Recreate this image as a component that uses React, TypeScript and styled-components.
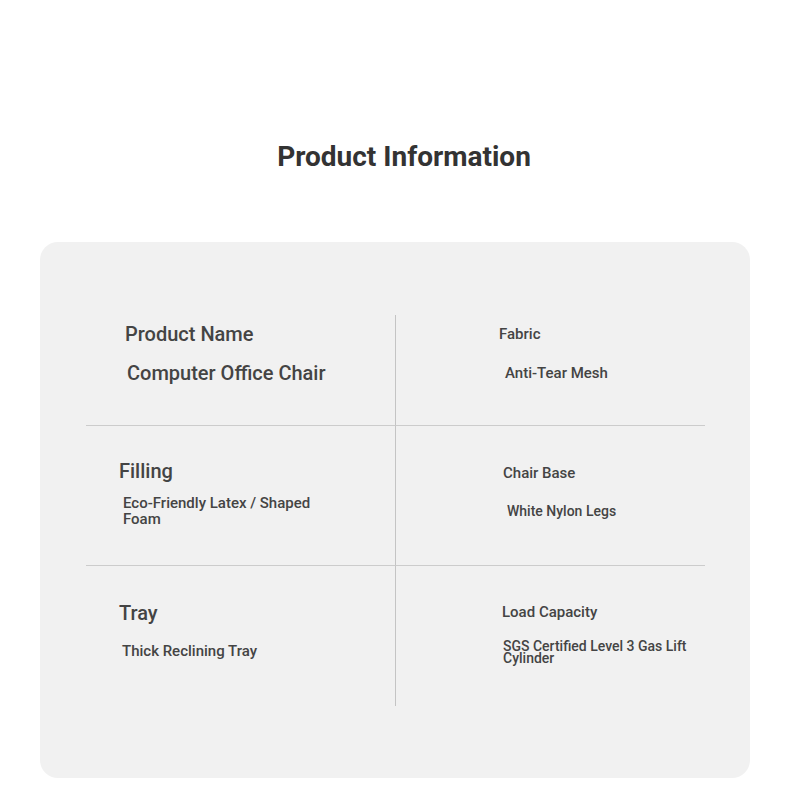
import styled, {createGlobalStyle} from 'styled-components';

type Field = {
  label: string;
  value: string;
  big?: boolean;
  size?: number;
  lx: number;
  ly: number;
  vx: number;
  vy: number;
  vw?: number;
  lh?: number;
};

const rows: {height: number; cells: Field[]}[] = [
  {
    height: 111,
    cells: [
      {label: 'Product Name', value: 'Computer Office Chair', big: true, size: 20, lh: 24, lx: 39, ly: 7, vx: 41, vy: 15},
      {label: 'Fabric', value: 'Anti-Tear Mesh', lx: 103, ly: 10, vx: 109, vy: 22},
    ],
  },
  {
    height: 140,
    cells: [
      {label: 'Filling', value: 'Eco-Friendly Latex / Shaped Foam', big: true, lx: 33, ly: 33, vx: 37, vy: 12, vw: 210},
      {label: 'Chair Base', value: 'White Nylon Legs', size: 14, lx: 107, ly: 38, vx: 111, vy: 21},
    ],
  },
  {
    height: 140,
    cells: [
      {label: 'Tray', value: 'Thick Reclining Tray', big: true, lx: 33, ly: 35, vx: 36, vy: 18},
      {label: 'Load Capacity', value: 'SGS Certified Level 3 Gas Lift Cylinder', size: 14, lh: 12, lx: 106, ly: 37, vx: 107, vy: 19, vw: 200},
    ],
  },
];

const App = (): JSX.Element => {
  return (
    <>
      <GlobalStyle/>
      <Page>
        <Title>Product Information</Title>
        <Card>
          <Table>
            {rows.map((row, r) =>
              row.cells.map((cell, c) => (
                <Cell key={cell.label} $height={row.height} $left={c === 0} $last={r === rows.length - 1}>
                  <Label $big={!!cell.big} $x={cell.lx} $y={cell.ly}>{cell.label}</Label>
                  <Value
                    $size={cell.size ?? 15}
                    $lh={cell.lh ?? 16}
                    $x={cell.vx}
                    $y={cell.vy}
                    $w={cell.vw}
                  >
                    {cell.value}
                  </Value>
                </Cell>
              ))
            )}
          </Table>
        </Card>
      </Page>
    </>
  );
};

export default App;

const GlobalStyle = createGlobalStyle`
  html, body {
    margin: 0;
    background: #ffffff;
  }
  body {
    font-family: Roboto, "Liberation Sans", sans-serif;
  }
`;

const Page = styled.main`
  width: 790px;
  padding: 140px 40px 31px;
  box-sizing: border-box;
  display: flex;
  flex-direction: column;
  align-items: center;
`;

const Title = styled.h1`
  margin: 0;
  padding-left: 18px;
  font-size: 28px;
  line-height: 34px;
  font-weight: 700;
  color: #333333;
`;

const Card = styled.section`
  align-self: stretch;
  margin-top: 68px;
  height: 536px;
  box-sizing: border-box;
  padding: 73px 45px 0 46px;
  background: #f1f1f1;
  border-radius: 18px;
`;

const Table = styled.div`
  display: grid;
  grid-template-columns: 310px 309px;
`;

const Cell = styled.div<{$height: number; $left: boolean; $last: boolean}>`
  height: ${({$height}) => $height}px;
  box-sizing: border-box;
  display: flex;
  flex-direction: column;
  align-items: flex-start;
  border-right: ${({$left}) => ($left ? '1px solid #c4c4c4' : 'none')};
  border-bottom: ${({$last}) => ($last ? 'none' : '1px solid #cccccc')};
`;

const Label = styled.div<{$big: boolean; $x: number; $y: number}>`
  margin: ${({$y, $x}) => `${$y}px 0 0 ${$x}px`};
  font-size: ${({$big}) => ($big ? 20 : 15)}px;
  line-height: ${({$big}) => ($big ? 24 : 18)}px;
  font-weight: 500;
  color: #444444;
`;

const Value = styled.div<{$size: number; $lh: number; $x: number; $y: number; $w?: number}>`
  margin: ${({$y, $x}) => `${$y}px 0 0 ${$x}px`};
  max-width: ${({$w}) => ($w ? `${$w}px` : 'none')};
  font-size: ${({$size}) => $size}px;
  line-height: ${({$lh}) => $lh}px;
  font-weight: 500;
  color: #444444;
`;
